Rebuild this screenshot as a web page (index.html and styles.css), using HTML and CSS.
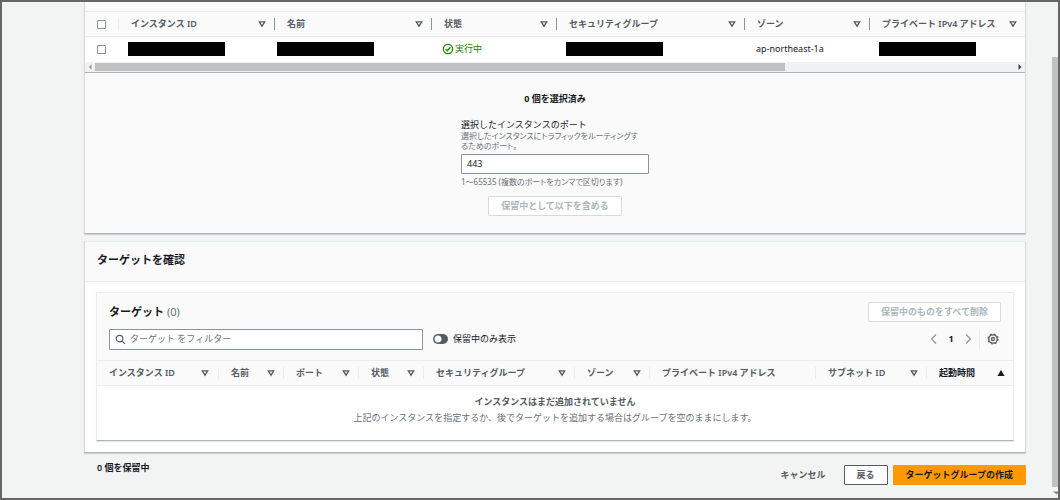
FILE: index.html
```html
<!DOCTYPE html>
<html lang="ja">
<head>
<meta charset="utf-8">
<meta name="viewport" content="width=device-width, initial-scale=1">
<title>ターゲットグループの作成</title>
<link rel="stylesheet" href="styles.css">
</head>
<body>
<svg class="defs" aria-hidden="true">
  <symbol id="sort" viewBox="0 0 8 8"><path d="M1.3 1.8h5.4L4 6.2z" fill="none" stroke="currentColor" stroke-width="1.3"/></symbol>
  <symbol id="sort-up" viewBox="0 0 8 8"><path d="M4 1l3.6 6H.4z" fill="currentColor"/></symbol>
</svg>
<div class="frame">
  <main class="content">
    <section class="panel instances">
      <div class="panel-top"></div>
      <table class="grid available">
        <colgroup><col class="a-check"><col class="a-id"><col class="a-name"><col class="a-state"><col class="a-sg"><col class="a-zone"><col class="a-ip"></colgroup>
        <thead>
          <tr>
            <th class="check"><input type="checkbox" class="box" aria-label="すべて選択"></th>
            <th><button class="sorter">インスタンス ID<svg class="tri"><use href="#sort"/></svg></button></th>
            <th><button class="sorter">名前<svg class="tri"><use href="#sort"/></svg></button></th>
            <th><button class="sorter">状態<svg class="tri"><use href="#sort"/></svg></button></th>
            <th><button class="sorter">セキュリティグループ<svg class="tri"><use href="#sort"/></svg></button></th>
            <th><button class="sorter">ゾーン<svg class="tri"><use href="#sort"/></svg></button></th>
            <th><button class="sorter">プライベート IPv4 アドレス<svg class="tri"><use href="#sort"/></svg></button></th>
          </tr>
        </thead>
        <tbody>
          <tr>
            <td class="check"><input type="checkbox" class="box" aria-label="インスタンスを選択"></td>
            <td class="masked"><div class="mask"></div></td>
            <td class="masked-tight"><div class="mask"></div></td>
            <td><span class="running"><svg class="ok" viewBox="0 0 12 12"><circle cx="6" cy="6" r="4.6"/><path d="M3.6 6.1l1.7 1.7 3.1-3.5"/></svg>実行中</span></td>
            <td class="masked"><div class="mask"></div></td>
            <td>ap-northeast-1a</td>
            <td class="masked"><div class="mask"></div></td>
          </tr>
        </tbody>
      </table>
      <div class="hscroll">
        <svg class="arrow dim" viewBox="0 0 10 10"><path d="M6.5 2.5v5L4 5z"/></svg>
        <div class="hscroll-track"><div class="hscroll-thumb"></div></div>
        <svg class="arrow" viewBox="0 0 10 10"><path d="M3.5 2v6L6.5 5z"/></svg>
      </div>
      <form class="port-form">
        <p class="selected">0 個を選択済み</p>
        <div class="field">
          <label class="field-label" for="port">選択したインスタンスのポート</label>
          <p class="hint">選択したインスタンスにトラフィックをルーティングするためのポート。</p>
          <input id="port" class="text-input" type="text" value="443">
          <p class="constraint">1〜65535 (複数のポートをカンマで区切ります)</p>
        </div>
        <button type="button" class="button" disabled>保留中として以下を含める</button>
      </form>
    </section>

    <section class="panel review">
      <header class="panel-header"><h2 class="title">ターゲットを確認</h2></header>
      <div class="panel-body">
        <div class="card">
          <div class="card-head">
            <div class="row">
              <h3 class="title">ターゲット <span class="count">(0)</span></h3>
              <button class="button" disabled>保留中のものをすべて削除</button>
            </div>
            <div class="row tools">
              <div class="search">
                <svg class="lens" viewBox="0 0 12 12"><circle cx="5" cy="5" r="3.6"/><path d="M7.7 7.7l3.1 3.1"/></svg>
                <input class="search-input" type="text" placeholder="ターゲット をフィルター" aria-label="ターゲット をフィルター">
              </div>
              <label class="toggle"><input type="checkbox" role="switch" class="switch">保留中のみ表示</label>
              <nav class="pager">
                <button class="icon-button" aria-label="前へ"><svg class="chevron" viewBox="0 0 10 12"><path d="M7 1.5L2.5 6 7 10.5"/></svg></button>
                <span class="page">1</span>
                <button class="icon-button" aria-label="次へ"><svg class="chevron" viewBox="0 0 10 12"><path d="M3 1.5L7.5 6 3 10.5"/></svg></button>
                <button class="icon-button settings" aria-label="設定"><svg class="gear" viewBox="0 0 12 12"><circle class="teeth" cx="6" cy="6" r="5"/><circle class="rim" cx="6" cy="6" r="4.2"/><circle class="rim" cx="6" cy="6" r="1.5"/></svg></button>
              </nav>
            </div>
          </div>
          <table class="grid targets">
            <colgroup><col class="t-id"><col class="t-name"><col class="t-port"><col class="t-state"><col class="t-sg"><col class="t-zone"><col class="t-ip"><col class="t-subnet"><col class="t-time"></colgroup>
            <thead>
              <tr>
                <th><button class="sorter">インスタンス ID<svg class="tri"><use href="#sort"/></svg></button></th>
                <th><button class="sorter">名前<svg class="tri"><use href="#sort"/></svg></button></th>
                <th><button class="sorter">ポート<svg class="tri"><use href="#sort"/></svg></button></th>
                <th><button class="sorter">状態<svg class="tri"><use href="#sort"/></svg></button></th>
                <th><button class="sorter">セキュリティグループ<svg class="tri"><use href="#sort"/></svg></button></th>
                <th><button class="sorter">ゾーン<svg class="tri"><use href="#sort"/></svg></button></th>
                <th><span class="sorter">プライベート IPv4 アドレス</span></th>
                <th><button class="sorter">サブネット ID<svg class="tri"><use href="#sort"/></svg></button></th>
                <th aria-sort="ascending"><button class="sorter sorted">起動時間<svg class="tri"><use href="#sort-up"/></svg></button></th>
              </tr>
            </thead>
            <tbody>
              <tr>
                <td colspan="9" class="empty">
                  <p class="empty-title">インスタンスはまだ追加されていません</p>
                  <p class="empty-text">上記のインスタンスを指定するか、後でターゲットを追加する場合はグループを空のままにします。</p>
                </td>
              </tr>
            </tbody>
          </table>
        </div>
      </div>
    </section>

    <footer class="footer">
      <p class="pending">0 個を保留中</p>
      <div class="actions">
        <button class="button link">キャンセル</button>
        <button class="button normal">戻る</button>
        <button class="button primary">ターゲットグループの作成</button>
      </div>
    </footer>
  </main>
  <div class="vscroll">
    <div class="vscroll-thumb"></div>
    <svg class="varrow" viewBox="0 0 6 10"><path d="M1 4h5v2L4.5 7z"/></svg>
  </div>
</div>
</body>
</html>
```
FILE: styles.css
```css
* { box-sizing: border-box; }

body {
  margin: 0;
  color: #16191f;
  background: #f2f3f3;
  font: 9px/12px "Noto Sans", "Noto Sans CJK JP", sans-serif;
}

h2, h3, p { margin: 0; }

button, input { font: inherit; color: inherit; }

.defs { position: absolute; width: 0; height: 0; }

.frame {
  display: flex;
  height: 100vh;
  border: 2px solid #666;
  overflow: hidden;
}

.content {
  flex: 1;
  min-width: 0;
  padding: 0 26px 0 82px;
}

.panel {
  background: #fafafa;
  border: solid #d5dbdb;
  border-width: 0 1px 1px;
  border-bottom-color: #aab7b8;
  box-shadow: 0 1px 1px rgba(0, 28, 36, 0.15);
}

.panel-top { height: 9px; }

/* Tables */
.grid {
  width: 100%;
  table-layout: fixed;
  border-collapse: collapse;
}

.grid th {
  height: 25px;
  padding: 0 8px 0 0;
  color: #545b64;
  font-weight: 600;
  text-align: left;
  white-space: nowrap;
  background: #fafafa;
  border: solid #eaeded;
  border-width: 1px 0;
}

.grid th::before {
  content: "";
  display: inline-block;
  width: 12px;
  height: 12px;
  vertical-align: middle;
  border-left: 1px solid #eaeded;
}

.grid th:first-child::before { border-left: 0; }

.available th:nth-child(n + 3)::before { border-left-color: #879596; }

.grid .sorter {
  display: inline-flex;
  align-items: center;
  justify-content: space-between;
  width: calc(100% - 13px);
  padding: 0;
  border: 0;
  background: none;
  font-weight: 600;
  vertical-align: middle;
}

.grid .sorted { color: #16191f; font-weight: 700; }

.tri { width: 8px; height: 8px; flex: none; }

.grid td {
  height: 25px;
  padding: 0 12px;
  background: #fff;
}

.grid .check { padding: 0 0 0 12px; }
.grid .check::before { display: none; }
.grid td.masked { padding: 0 10px; }
.grid td.masked-tight { padding: 0 3px; }

.a-check { width: 33px; }
.a-id { width: 156px; }
.a-name { width: 157px; }
.a-state, .a-zone { width: 125px; }
.a-sg { width: 188px; }
.a-ip { width: 156px; }

.t-id { width: 121px; }
.t-name, .t-state { width: 65px; }
.t-port { width: 75px; }
.t-sg { width: 151px; }
.t-zone { width: 75px; }
.t-ip { width: 166px; }
.t-subnet { width: 111px; }
.t-time { width: 87px; }

.box {
  appearance: none;
  display: block;
  width: 9px;
  height: 9px;
  margin: 0;
  background: #fff;
  border: 1px solid #879596;
  border-radius: 1px;
}

.mask { width: 97px; height: 14px; background: #000; }

.running { display: flex; align-items: center; gap: 1px; color: #1d8102; }

.ok {
  width: 12px;
  height: 12px;
  margin-left: -1px;
  fill: none;
  stroke: currentColor;
  stroke-width: 1.3;
}

/* Scroll bars */
.hscroll {
  display: flex;
  height: 11px;
  background: #f1f1f1;
  border-bottom: 1px solid #aab7b8;
}

.arrow { width: 10px; height: 10px; fill: #404040; }
.dim { fill: #8b8b8b; }
.hscroll-track { flex: 1; padding: 1px 0 0; }
.hscroll-thumb { width: 75%; height: 8px; background: #c1c1c1; }

.vscroll {
  display: flex;
  flex-direction: column;
  width: 6px;
  padding-top: 55px;
  background: #f2f3f3;
}

.vscroll-thumb { flex: 1; background: #c1c1c1; }
.varrow { width: 6px; height: 11px; fill: #8b8b8b; }

/* Port form */
.port-form {
  display: flex;
  flex-direction: column;
  align-items: center;
  padding: 20px 0 17px;
}

.selected { font-weight: 700; }

.field { width: 188px; margin: 14px 0 9px; }

.field-label { display: block; }

.hint, .constraint {
  color: #687078;
  font-size: 8px;
  line-height: 10px;
  font-feature-settings: "palt";
}

.hint { padding-right: 8px; }

.text-input {
  display: block;
  width: 100%;
  height: 20px;
  margin: 3px 0;
  padding: 0 5px;
  background: #fff;
  border: 1px solid #879596;
  border-radius: 1px;
}

.button {
  height: 20px;
  padding: 0 12px;
  font-weight: 600;
  line-height: 12px;
  white-space: nowrap;
  background: #fff;
  border: 1px solid #545b64;
  border-radius: 1px;
}

.button:disabled { color: #aab7b8; border-color: #d5dbdb; }
.link { color: #545b64; background: none; border-color: transparent; }
.normal { color: #545b64; }
.primary { color: #16191f; font-weight: 700; background: #f90; border-color: #f90; }

/* Review panel */
.review { margin-top: 7px; border-top: 1px solid #eaeded; background: #fff; }

.panel-header {
  padding: 10px 12px 13px;
  background: #fafafa;
  border-bottom: 1px solid #eaeded;
}

.title { font-size: 11px; line-height: 16px; font-weight: 700; }
.count { color: #687078; font-weight: 400; }

.panel-body { padding: 10px 11px 11px; }

.card {
  border: 1px solid #eaeded;
  border-bottom-color: #aab7b8;
  box-shadow: 0 1px 1px rgba(0, 28, 36, 0.1);
}

.card-head { padding: 9px 12px 10px; background: #fafafa; }

.row { display: flex; align-items: center; justify-content: space-between; }

.tools { gap: 10px; margin-top: 7px; justify-content: flex-start; }

.search {
  display: flex;
  align-items: center;
  gap: 4px;
  flex: 0 1 314px;
  height: 21px;
  padding-left: 5px;
  background: #fff;
  border: 1px solid #879596;
  border-radius: 1px;
}

.lens { width: 11px; height: 11px; flex: none; fill: none; stroke: #545b64; stroke-width: 1.3; }

.search-input { flex: 1; min-width: 0; padding: 0; border: 0; outline: 0; background: none; }
.search-input::placeholder { color: #687078; opacity: 1; }

.toggle { display: flex; align-items: center; gap: 5px; white-space: nowrap; }

.switch {
  appearance: none;
  width: 15px;
  height: 10px;
  margin: 0;
  border-radius: 5px;
  background: radial-gradient(circle at 5px 5px, #fff 3px, #545b64 4px);
}

.pager { display: flex; align-items: center; margin-left: auto; }

.icon-button { display: flex; padding: 0; border: 0; background: none; }

.chevron { width: 10px; height: 12px; fill: none; stroke: #879596; stroke-width: 1.2; }

.page { width: 24px; font-weight: 700; text-align: center; }

.settings { margin-left: 6px; padding: 4px 2px 4px 7px; border-left: 1px solid #eaeded; }

.gear { width: 12px; height: 12px; fill: none; stroke: #545b64; }
.rim { stroke-width: 1.3; }
.teeth { stroke-width: 1.2; stroke-dasharray: 2 1.93; }

.grid .empty { height: 55px; padding-bottom: 5px; color: #687078; text-align: center; }
.empty-title { color: #545b64; font-weight: 600; }
.empty-text { margin-top: 4px; }

/* Footer */
.footer {
  display: flex;
  justify-content: space-between;
  align-items: flex-start;
  padding: 9px 0 0 13px;
}

.pending { font-weight: 600; }

.actions { display: flex; gap: 5px; padding-top: 3px; }
```
